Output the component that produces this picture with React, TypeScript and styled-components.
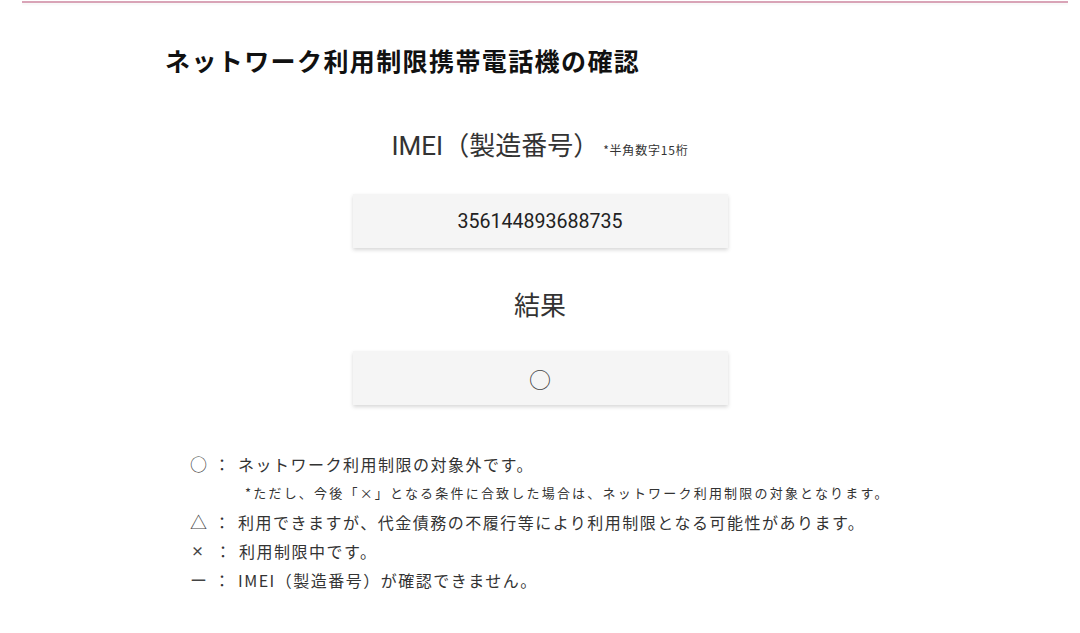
import React from 'react';
import styled, { createGlobalStyle } from 'styled-components';

const GlobalStyle = createGlobalStyle`
  html, body {
    margin: 0;
    padding: 0;
    background: #ffffff;
  }
  body {
    font-family: Roboto, "Noto Sans CJK JP", sans-serif;
    color: #333333;
  }
`;

const legend = [
  { mark: '○', text: 'ネットワーク利用制限の対象外です。' },
  { mark: '△', text: '利用できますが、代金債務の不履行等により利用制限となる可能性があります。' },
  { mark: '×', text: '利用制限中です。', small: true },
  { mark: 'ー', text: 'IMEI（製造番号）が確認できません。' },
];

function App() {
  const imei = '356144893688735';

  return (
    <>
      <GlobalStyle />
      <Page>
        <TopRule />
        <Title>ネットワーク利用制限携帯電話機の確認</Title>
        <Center>
          <Heading>
            IMEI（製造番号）<Note>*半角数字15桁</Note>
          </Heading>
          <Field>{imei}</Field>
          <Heading $gap={40}>結果</Heading>
          <Field $gap={27}>
            <ResultMark>○</ResultMark>
          </Field>
        </Center>
        <Legend>
          {legend.map((item, i) => (
            <React.Fragment key={item.mark}>
              <Row>
                <Mark $small={item.small}>{item.mark}</Mark>
                <Colon>：</Colon>
                <RowText>{item.text}</RowText>
              </Row>
              {i === 0 && (
                <NoteRow>
                  *ただし、今後「×」となる条件に合致した場合は、ネットワーク利用制限の対象となります。
                </NoteRow>
              )}
            </React.Fragment>
          ))}
        </Legend>
      </Page>
    </>
  );
}

export default App;

const Page = styled.div`
  width: 1080px;
  height: 633px;
  overflow: hidden;
`;

const TopRule = styled.div`
  height: 2px;
  margin: 1px 12px 0 22px;
  background: #d9a4b7;
  box-shadow: 0 2px 2px rgba(0, 0, 0, 0.04);
`;

const Title = styled.h1`
  margin: 40px 0 0 165px;
  font-family: "Noto Sans CJK JP", sans-serif;
  font-size: 25px;
  font-weight: 700;
  letter-spacing: 1.4px;
  line-height: 35px;
  color: #111111;
`;

const Center = styled.div`
  display: flex;
  flex-direction: column;
  align-items: center;
`;

const Heading = styled.h2<{ $gap?: number }>`
  margin: ${(p) => p.$gap ?? 50}px 0 0;
  font-size: 26px;
  font-weight: 400;
  line-height: 36px;
  color: #333333;
  white-space: nowrap;
`;

const Note = styled.span`
  margin-left: 4px;
  font-family: "Noto Sans CJK JP", sans-serif;
  font-size: 12px;
  letter-spacing: 0.8px;
  color: #333333;
`;

const Field = styled.div<{ $gap?: number }>`
  margin-top: ${(p) => p.$gap ?? 26}px;
  width: 375px;
  height: 54px;
  display: flex;
  align-items: center;
  justify-content: center;
  background: #f5f5f5;
  box-shadow: 0 2px 4px rgba(0, 0, 0, 0.16);
  font-size: 19.6px;
  color: #222222;
`;

const ResultMark = styled.span`
  font-family: "Noto Sans CJK JP", sans-serif;
  font-size: 22px;
  color: #444444;
  line-height: 1;
`;

const Legend = styled.div`
  margin-top: 44px;
  padding-left: 190px;
  font-family: "Noto Sans CJK JP", sans-serif;
  color: #333333;
`;

const Row = styled.div`
  display: flex;
  align-items: center;
  height: 29px;
`;

const Mark = styled.span<{ $small?: boolean }>`
  width: 22px;
  font-size: ${(p) => (p.$small ? '13px' : '17px')};
  font-weight: ${(p) => (p.$small ? 700 : 400)};
  padding-left: ${(p) => (p.$small ? '1px' : '0')};
  color: #444444;
`;

const Colon = styled.span`
  width: 20px;
  text-align: center;
  font-size: 16px;
`;

const RowText = styled.span`
  margin-left: 6px;
  font-size: 16px;
  letter-spacing: 1.5px;
  white-space: nowrap;
`;

const NoteRow = styled.div`
  height: 29px;
  display: flex;
  align-items: center;
  padding-left: 55px;
  font-size: 13px;
  letter-spacing: 2.2px;
  white-space: nowrap;
`;
